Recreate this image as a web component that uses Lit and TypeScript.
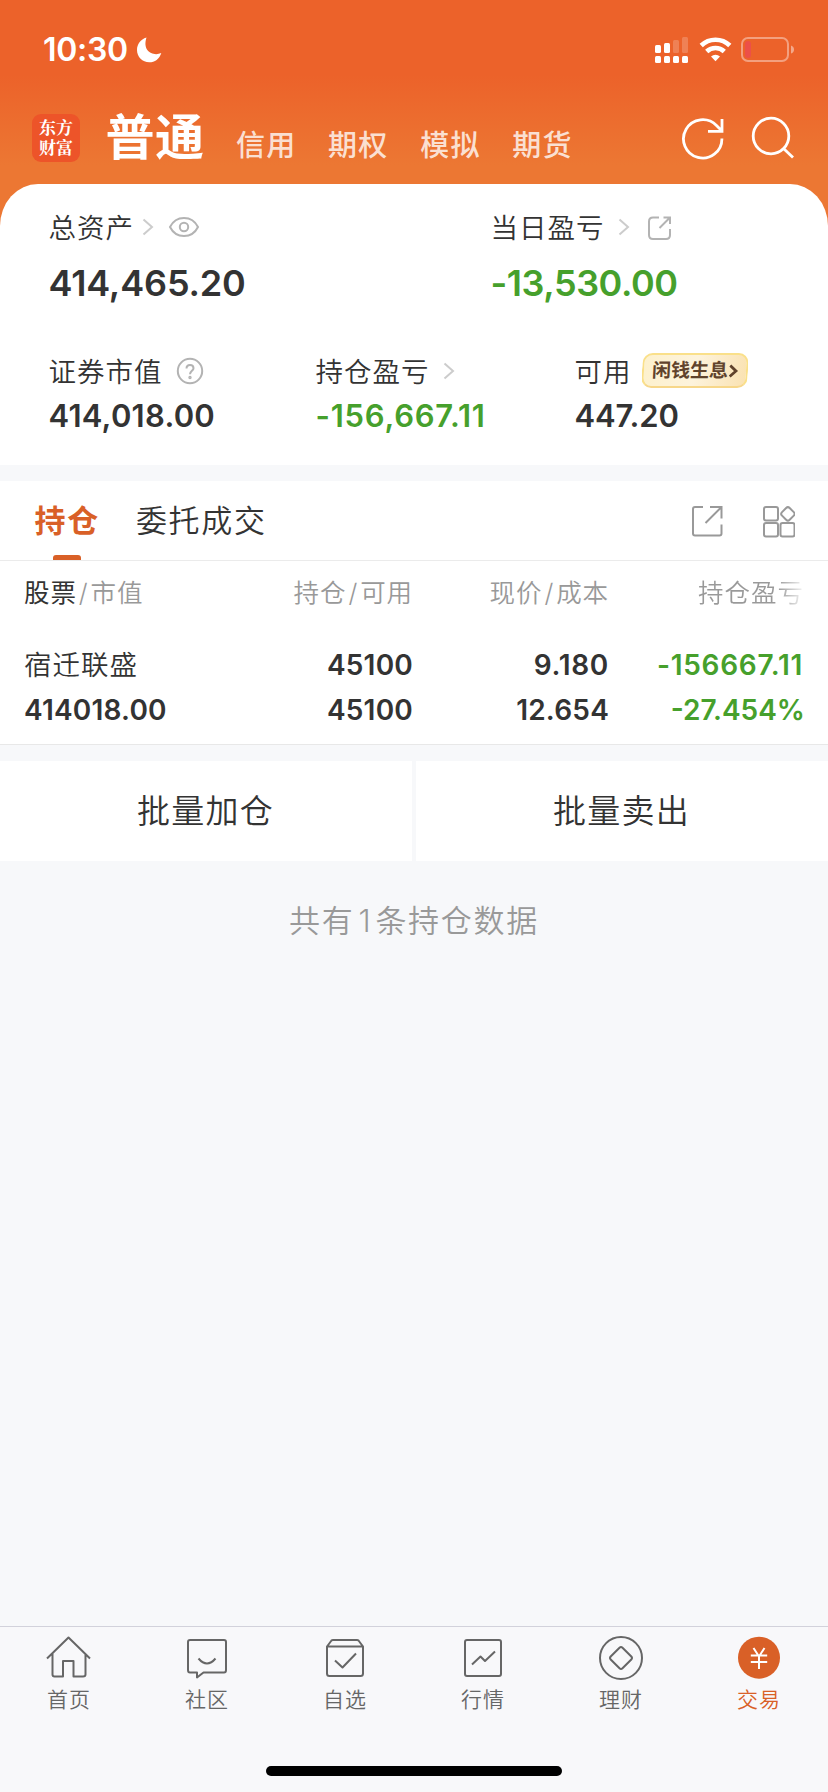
import { LitElement, html, css, svg } from "lit";
import { customElement } from "lit/decorators.js";
import { classMap } from "lit/directives/class-map.js";

const chevron = html`<svg class="chev" width="12" height="18" viewBox="0 0 12 18"><path d="M1.500 1.500 10 9l-8.500 7.500" fill="none" stroke="#ccc" stroke-width="2"/></svg>`;

const accounts = ["信用", "期权", "模拟", "期货"];

const tabs = [
  { name: "首页", icon: svg`<path d="M2 25.500 23.500 4.500 45 25.500M7.500 20.500V41.500Q7.500 43.500 9.500 43.500H18V28H28.500V43.500H38Q40.500 43.500 40.500 41.500V20.500"/>` },
  { name: "社区", icon: svg`<path d="M7 7H41Q43 7 43 9V37Q43 39.500 41 39.500H20.500L14 44.500V39.500H7Q5 39.500 5 37V9Q5 7 7 7ZM15.500 25.500Q24 35.500 32.500 25.500"/>` },
  { name: "自选", icon: svg`<path d="M6 13.500 10.500 7.500Q11 7 12 7H36Q37 7 37.500 7.500L42 13.500M6 13.500H42V40.500Q42 43 39.500 43H8.500Q6 43 6 40.500ZM14 27.500 21.500 34.500 35 20.500"/>` },
  { name: "行情", icon: svg`<rect x="6" y="7" width="36" height="36" rx="2"/><path d="M13 31.500 21.500 23.500 26 28 36 18.500"/>` },
  { name: "理财", icon: svg`<circle cx="24" cy="25" r="21"/><path d="M22.500 14.700Q24 13.300 25.500 14.700L34.300 23.500Q35.700 25 34.300 26.500L25.500 35.300Q24 36.700 22.500 35.300L13.700 26.500Q12.300 25 13.700 23.500Z"/>` },
  { name: "交易", active: true, icon: svg`<circle cx="24" cy="24.700" r="21" fill="#d96027" stroke="none"/><path d="M18.500 15 24 23.500 29.500 15M24 23.500V36M15.800 22.500H32.200M15.800 29H32.200" stroke="#fff"/>` },
];

@customElement("status-bar")
export class StatusBar extends LitElement {
  static styles = css`
    :host { display: flex; justify-content: space-between; align-items: center; height: 40px; padding: 30px 33px 0 43px; color: #fff; }
    .left { display: flex; align-items: center; gap: 8px; font-size: 32px; font-weight: 600; line-height: 40px; letter-spacing: -0.300px; }
    svg { display: block; }
  `;
  render() {
    return html`
      <div class="left"><span>10:30</span>
        <svg width="26" height="26" viewBox="0 0 26 26"><path d="M10.500 .6C4.500 2.500 1 7.500 1 13c0 7 5.500 12.300 12.300 12.300 5.500 0 10.200-3.300 12-9.300-7.500 3.500-19.500-1-14.800-15.400Z" fill="#fff"/></svg>
      </div>
      <svg width="140" height="28" viewBox="0 0 140 28" fill="#fff">
        <rect x="0" y="9" width="6" height="8" rx="1.500"/><rect x="9" y="7" width="6" height="10" rx="1.500"/>
        <g opacity=".2"><rect x="18" y="4" width="6" height="13" rx="1.500"/><rect x="27" y="1" width="6" height="16" rx="1.500"/></g>
        <rect x="0" y="20" width="6" height="7" rx="1.500"/><rect x="9" y="20" width="6" height="7" rx="1.500"/><rect x="18" y="20" width="6" height="7" rx="1.500"/><rect x="27" y="20" width="6" height="7" rx="1.500"/>
        <g fill="none" stroke="#fff" stroke-width="4.600"><path d="M46.200 9.500a20.500 20.500 0 0 1 28.600 0"/><path d="M51.700 15.500a12.800 12.800 0 0 1 17.600 0"/></g>
        <path d="M56 20.500a7 7 0 0 1 9 0L60.500 25.300Z"/>
        <rect x="87" y="2" width="46" height="23" rx="6" fill="none" stroke="#fff" stroke-opacity=".4" stroke-width="2"/>
        <rect x="90" y="5" width="6" height="17" rx="3" fill="#ec5048"/>
        <path d="M136 9.500q3 1 3 4t-3 4Z" opacity=".45"/>
      </svg>`;
  }
}

@customElement("app-header")
export class AppHeader extends LitElement {
  static styles = css`
    :host { display: flex; align-items: center; height: 50px; margin-top: 43px; padding: 0 32px; color: #fff; }
    .logo { width: 48px; height: 48px; box-sizing: border-box; padding-top: 5px; border-radius: 9px; background: #ed5429; text-align: center; font: 700 17px/20px "Liberation Serif", "Noto Serif CJK SC", "Noto Sans CJK SC", serif; }
    .current { margin: 0 0 0 25.500px; font-size: 49px; font-weight: 700; line-height: 50px; letter-spacing: 0.500px; }
    .others { display: flex; gap: 31.700px; margin: 15px 0 0 31.500px; font-size: 29px; line-height: 36px; font-weight: 500; letter-spacing: 1.200px; color: rgba(255, 255, 255, 0.8); }
    .tools { margin-left: auto; display: block; }
  `;
  render() {
    return html`
      <div class="logo">东方<br />财富</div>
      <div class="current">普通</div>
      <div class="others">${accounts.map((a) => html`<span>${a}</span>`)}</div>
      <svg class="tools" width="116" height="48" viewBox="0 0 116 48" fill="none" stroke="#fff" stroke-width="2.800">
        <path d="M41.900 24.500A19.200 19.200 0 1 1 36.500 11.500L42 17M28 17.300H42V5"/>
        <circle cx="91" cy="22" r="17.800"/><path d="M103.500 34.500 113 43.500"/>
      </svg>`;
  }
}

@customElement("asset-summary")
export class AssetSummary extends LitElement {
  static styles = css`
    :host { display: block; height: 281px; box-sizing: border-box; padding: 23px 0 0 48.500px; background: #fff; border-radius: 38px 38px 0 0 / 42px 42px 0 0; }
    .top { display: grid; grid-template-columns: 442px 1fr; }
    .bottom { display: grid; grid-template-columns: 267px 259px 1fr; margin-top: 48px; }
    .label { display: flex; align-items: center; height: 40px; font-size: 27.500px; font-weight: 350; letter-spacing: 1px; line-height: 40px; white-space: nowrap; }
    .text { padding-top: 1px; }
    .big { margin-top: 16px; font-size: 36px; font-weight: 600; line-height: 40px; letter-spacing: -0.150px; }
    .num { margin-top: 5px; font-size: 31px; font-weight: 600; line-height: 40px; letter-spacing: 0.250px; }
    .green { color: #46a02c; }
    .tight { letter-spacing: -0.450px; }
    .snug { letter-spacing: -0.100px; }
    .loose { letter-spacing: 0.750px; }
    .chev { margin-left: 13.500px; }
    .near .chev { margin-left: 8px; }
    .icon { margin-left: 13.500px; }
    .share { margin-left: 17px; margin-top: 1px; }
    .badge { display: flex; align-items: center; justify-content: center; box-sizing: border-box; width: 106px; height: 35px; margin: -2px 0 0 10px; border: 2px solid #fae08a; border-bottom-color: #f7d78a; border-radius: 10px; transform: skewX(-3deg); background: linear-gradient(100deg, #fdf1cd, #fdf3dc 50%, #fae2b2); color: #60432c; font-size: 19px; font-weight: 700; letter-spacing: 0; line-height: 30px; }
    .badge svg { margin-left: 1px; }
  `;
  render() {
    return html`
      <div class="top">
        <div>
          <div class="label near"><span class="text">总资产</span>${chevron}
            <svg class="icon" width="32" height="22" viewBox="0 0 32 22" fill="none" stroke="#b3b3b3" stroke-width="2"><path d="M2 11C5 5 10 2 16 2s11 3 14 9c-3 6-8 9-14 9S5 17 2 11Z"/><circle cx="16" cy="11" r="4.200"/></svg>
          </div>
          <div class="big">414,465.20</div>
        </div>
        <div>
          <div class="label"><span class="text">当日盈亏</span>${chevron}
            <svg class="share" width="26" height="26" viewBox="0 0 26 26" fill="none" stroke="#b3b3b3" stroke-width="2"><path d="M12 2.500H6Q2 2.500 2 6.500V20Q2 24 6 24H19Q23 24 23 20V14M16.500 2.500H23V9M23 2.500 12.500 13"/></svg>
          </div>
          <div class="big green tight">-13,530.00</div>
        </div>
      </div>
      <div class="bottom">
        <div>
          <div class="label"><span class="text">证券市值</span>
            <svg class="icon" width="28" height="28" viewBox="0 0 28 28" fill="none" stroke="#b3b3b3" stroke-width="2"><circle cx="14" cy="14" r="12.200"/><path d="M10.500 11.500q0-3.500 3.500-3.500t3.500 3.300c0 2.500-3.500 2.700-3.500 6"/><circle cx="14" cy="20.500" r=".7"/></svg>
          </div>
          <div class="num">414,018.00</div>
        </div>
        <div>
          <div class="label"><span class="text">持仓盈亏</span>${chevron}</div>
          <div class="num green loose">-156,667.11</div>
        </div>
        <div>
          <div class="label"><span class="text">可用</span><span class="badge">闲钱生息<svg width="9" height="14" viewBox="0 0 9 14"><path d="M1 1.500 7 7l-6 5.500" fill="none" stroke="#60432c" stroke-width="2.800"/></svg></span></div>
          <div class="num snug">447.20</div>
        </div>
      </div>`;
  }
}

@customElement("position-panel")
export class PositionPanel extends LitElement {
  static styles = css`
    :host { display: block; margin-top: 16px; background: #fff; border-bottom: 1px solid #e8e8e8; }
    .tabs { display: flex; align-items: stretch; height: 79px; border-bottom: 1px solid #ebebeb; padding: 0 33.500px 0 34.500px; font-size: 31px; font-weight: 350; line-height: 79px; letter-spacing: 1.700px; }
    .tab { position: relative; }
    .tab + .tab { margin-left: 36px; }
    .on { color: #d96027; font-weight: 700; }
    .on::after { content: ""; position: absolute; left: 18.500px; bottom: 0; width: 28px; height: 5px; border-radius: 3px 3px 0 0; background: #d96027; }
    .tools { margin: 22px 0 0 auto; }
    .table { display: grid; grid-template-columns: 1fr 207px 196px 194px; padding: 11px 25px 0 24px; text-align: right; height: 172px; grid-template-rows: 42px 29px 45px 45px; }
    .head { color: #999; font-size: 25.500px; font-weight: 350; line-height: 42px; letter-spacing: 0.900px; white-space: nowrap; }
    .head i { font-style: normal; margin: 0 2px; }
    .dark { color: #333; font-weight: 400; }
    .fade { background: linear-gradient(90deg, #999 75%, #f2f2f2 99%); background-clip: text; -webkit-background-clip: text; color: transparent; justify-self: end; margin-right: -1px; letter-spacing: 1px; }
    .gap { grid-column: 1 / -1; }
    .cell { font-size: 28px; font-weight: 600; line-height: 45px; letter-spacing: 0.200px; }
    .name { font-size: 27.500px; font-weight: 350; letter-spacing: 1px; }
    .wide { letter-spacing: 0.700px; }
    .edge { margin-right: -2px; letter-spacing: 0; }
    .green { color: #46a02c; }
    .heads, .row { display: contents; }
    .l { text-align: left; }
  `;
  render() {
    return html`
      <div class="tabs">
        <span class="tab on">持仓</span><span class="tab">委托成交</span>
        <svg class="tools" width="106" height="36" viewBox="0 0 106 36" fill="none" stroke="#999" stroke-width="2">
          <path d="M14 4H6Q4 4 4 6V30.500Q4 32.500 6 32.500H30.500Q32.500 32.500 32.500 30.500V21.500M21 4H32.500V15.500M32.500 4 16.500 20"/>
          <rect x="75" y="4" width="14" height="13.500" rx="2"/><rect x="75" y="20" width="14" height="13.500" rx="2"/><rect x="91.500" y="20" width="14" height="13.500" rx="2"/>
          <rect x="93.500" y="5.500" width="10.800" height="10.800" rx="2.500" transform="rotate(45 98.900 10.900)"/>
        </svg>
      </div>
      <div class="table">
        <div class="heads">
          <div class="head l"><span class="dark">股票</span><i>/</i>市值</div>
          <div class="head">持仓<i>/</i>可用</div>
          <div class="head">现价<i>/</i>成本</div>
          <div class="head fade">持仓盈亏</div>
        </div>
        <div class="gap"></div>
        <div class="row">
          <div class="cell name l">宿迁联盛</div><div class="cell">45100</div><div class="cell wide">9.180</div><div class="cell wide green">-156667.11</div>
        </div>
        <div class="row">
          <div class="cell l">414018.00</div><div class="cell">45100</div><div class="cell">12.654</div><div class="cell edge green">-27.454%</div>
        </div>
      </div>`;
  }
}

@customElement("tab-bar")
export class TabBar extends LitElement {
  static styles = css`
    :host { display: block; height: 166px; box-sizing: border-box; border-top: 1px solid #d2d2db; background: #f8f8fa; }
    .items { display: grid; grid-template-columns: repeat(6, 138px); height: 139px; }
    .item { display: flex; flex-direction: column; align-items: center; padding-top: 6px; color: #666; font-size: 21px; font-weight: 350; line-height: 30px; letter-spacing: 1px; }
    .item svg { display: block; margin-bottom: 4px; fill: none; stroke: #666; stroke-width: 2; stroke-linejoin: round; }
    .active { color: #d96027; }
    .home { width: 296px; height: 10px; margin: 0 auto; border-radius: 5px; background: #000; }
  `;
  render() {
    return html`
      <div class="items">
        ${tabs.map((t) => html`<div class=${classMap({ item: true, active: !!t.active })}><svg width="48" height="48" viewBox="0 0 48 48">${t.icon}</svg>${t.name}</div>`)}
      </div>
      <div class="home"></div>`;
  }
}

@customElement("app-root")
export class AppRoot extends LitElement {
  static styles = css`
    :host { display: flex; flex-direction: column; width: 828px; height: 1792px; overflow: hidden; color: #333; background: #f7f8fa; font-family: Inter, "Noto Sans CJK SC", sans-serif; }
    .hero { height: 465px; flex: none; background: linear-gradient(#ec622a 0, #ec622a 75px, #ec7733 165px, #ec7733 240px, #fff 240px); }
    .summary { margin-top: 21px; }
    .actions { display: grid; grid-template-columns: 1fr 1fr; gap: 4px; margin-top: 16px; }
    .action { height: 100px; background: #fff; text-align: center; font-size: 33px; font-weight: 350; line-height: 101px; letter-spacing: 1.300px; text-indent: -1px; }
    .count { flex: 1; padding-top: 40px; text-align: center; color: #999; font-size: 31px; font-weight: 350; line-height: 40px; letter-spacing: 1.700px; }
    .total { margin: 0 3px 0 4px; }
  `;
  render() {
    return html`
      <div class="hero">
        <status-bar></status-bar>
        <app-header></app-header>
        <asset-summary class="summary"></asset-summary>
      </div>
      <position-panel></position-panel>
      <div class="actions"><div class="action">批量加仓</div><div class="action">批量卖出</div></div>
      <div class="count">共有<span class="total">1</span>条持仓数据</div>
      <tab-bar></tab-bar>`;
  }
}
